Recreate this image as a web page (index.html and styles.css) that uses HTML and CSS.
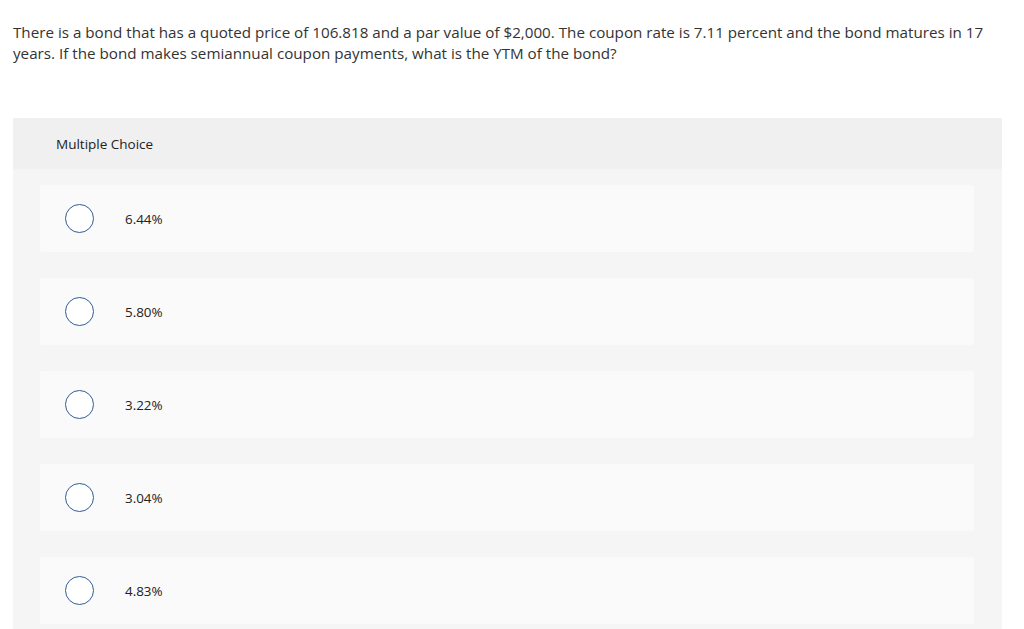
FILE: index.html
```html
<!DOCTYPE html>
<html>
<head>
<meta charset="utf-8">
<link rel="stylesheet" href="styles.css">
</head>
<body>
<div class="page">
  <p class="question">There is a bond that has a quoted price of 106.818 and a par value of $2,000. The coupon rate is 7.11 percent and the bond matures in 17 years. If the bond makes semiannual coupon payments, what is the YTM of the bond?</p>
  <div class="panel">
    <div class="panel-header">Multiple Choice</div>
    <div class="options">
      <div class="option"><span class="radio"></span><span class="label">6.44%</span></div>
      <div class="option"><span class="radio"></span><span class="label">5.80%</span></div>
      <div class="option"><span class="radio"></span><span class="label">3.22%</span></div>
      <div class="option"><span class="radio"></span><span class="label">3.04%</span></div>
      <div class="option"><span class="radio"></span><span class="label">4.83%</span></div>
    </div>
  </div>
</div>
</body>
</html>
```
FILE: styles.css
```css
html, body {
  margin: 0;
  padding: 0;
  background: #ffffff;
}
body {
  font-family: "Open Sans", "Lato", sans-serif;
  color: #333333;
  overflow: hidden;
}
.page {
  padding: 22px 22px 0 13px;
}
.question {
  margin: 0;
  font-size: 15.2px;
  line-height: 21px;
  color: #333333;
  max-width: 985px;
}
.panel {
  margin-top: 54px;
  width: 989px;
  background: #f5f5f5;
}
.panel-header {
  background: #f0f0f0;
  height: 51px;
  display: flex;
  align-items: center;
  padding-left: 43px;
  font-size: 13.5px;
  color: #222222;
}
.options {
  display: flex;
  flex-direction: column;
  gap: 26px;
  padding: 16px 28px 20px 27px;
}
.option {
  height: 67px;
  background: #fafafa;
  border-radius: 3px;
  display: flex;
  align-items: center;
  padding-left: 25px;
}
.radio {
  width: 27px;
  height: 27px;
  border: 1px solid #2f5d97;
  border-radius: 50%;
  background: #ffffff;
  flex: none;
}
.label {
  margin-left: 31px;
  font-size: 13.4px;
  color: #222222;
}
```
